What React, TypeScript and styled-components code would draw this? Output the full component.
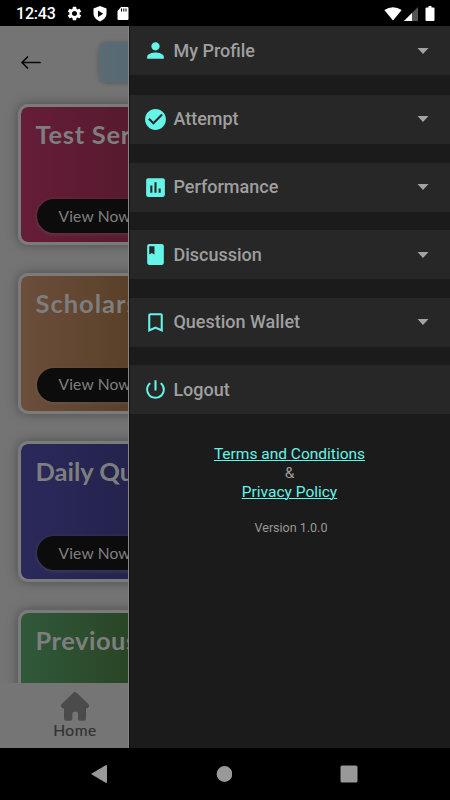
import React from "react";
import styled, { createGlobalStyle } from "styled-components";
import {
  MdPerson,
  MdCheckCircle,
  MdInsertChart,
  MdBook,
  MdBookmarkBorder,
  MdPowerSettingsNew,
  MdSettings,
} from "react-icons/md";

const Global = createGlobalStyle`
  * { box-sizing: border-box; }
  html, body { margin: 0; padding: 0; background: #000; }
  body { font-family: Roboto, sans-serif; overflow: hidden; }
  svg { display: block; flex-shrink: 0; }
`;

const Phone = styled.div`
  width: 450px;
  height: 800px;
  display: flex;
  flex-direction: column;
  background: #000;
  overflow: hidden;
`;

const StatusBar = styled.header`
  height: 26px;
  flex-shrink: 0;
  display: flex;
  align-items: center;
  padding: 1px 14px 0 16px;
  color: #fff;
`;

const Clock = styled.span`
  width: 50px;
  font-size: 16px;
  font-weight: 500;
  letter-spacing: -0.2px;
  line-height: 26px;
`;

const StatusGroup = styled.div<{ $gap: number; $end?: boolean }>`
  display: flex;
  align-items: center;
  gap: ${(p) => p.$gap}px;
  margin-left: ${(p) => (p.$end ? "auto" : "0")};
`;

const Body = styled.div`
  height: 722px;
  flex-shrink: 0;
  display: flex;
`;

const HomePane = styled.main`
  width: 129px;
  flex-shrink: 0;
  overflow: hidden;
  display: flex;
  flex-direction: column;
  background: #747474;
  border-right: 1px solid #858585;
  font-family: Lato, sans-serif;
`;

const TopBar = styled.div`
  height: 58px;
  flex-shrink: 0;
  display: flex;
  padding: 16px 0 0 21px;
`;

const BackIcon = styled.svg`
  margin-top: 14px;
`;

const Banner = styled.div`
  width: 250px;
  height: 40px;
  flex-shrink: 0;
  margin-left: 58px;
  border-radius: 7px;
  background: linear-gradient(90deg, #5b6b72, #566a74 30px);
  box-shadow: 0 1px 5px rgba(0, 0, 0, 0.25);
`;

const CardList = styled.div`
  height: 599px;
  flex-shrink: 0;
  overflow: hidden;
  display: flex;
  flex-direction: column;
  gap: 27.6px;
  padding: 20px 0 0 18px;
`;

const Card = styled.section<{ $from: string; $to: string }>`
  width: 414px;
  height: 141px;
  flex-shrink: 0;
  padding: 15px 0 0 14.5px;
  border: 3px solid #7b7b7b;
  border-radius: 10px;
  background: linear-gradient(90deg, ${(p) => p.$from}, ${(p) => p.$to} 108px) padding-box;
  box-shadow: 0 0 12px rgba(0, 0, 0, 0.35);
  white-space: nowrap;
`;

const CardTitle = styled.h2<{ $spacing: number }>`
  margin: 0;
  height: 77px;
  font-size: 25.5px;
  line-height: 25px;
  font-weight: 700;
  letter-spacing: ${(p) => p.$spacing}px;
  color: #7e7e7e;
`;

const ViewButton = styled.button`
  display: block;
  width: 130px;
  height: 34px;
  margin: 0 0 0 1px;
  padding: 0 0 1px 22px;
  border: 0;
  border-radius: 17px;
  background: #0c0c0c;
  box-shadow: 0 1px 4px rgba(110, 110, 110, 0.4);
  color: #808080;
  font-family: Lato, sans-serif;
  font-size: 15.6px;
  letter-spacing: 0.15px;
  text-align: left;
`;

const BottomTab = styled.nav`
  height: 65px;
  width: 150px;
  flex-shrink: 0;
  display: flex;
  flex-direction: column;
  align-items: center;
  padding-top: 9px;
  background: #757575;
`;

const TabLabel = styled.span`
  color: #333;
  font-size: 15.6px;
  line-height: 19px;
  letter-spacing: 0.5px;
  -webkit-text-stroke: 0.2px #333;
`;

const Drawer = styled.aside`
  flex: 1;
  background: #1b1b1b;
  box-shadow: inset 1px 0 0 #101010;
`;

const Menu = styled.div`
  display: flex;
  flex-direction: column;
  gap: 18.6px;
`;

const MenuRow = styled.div<{ $first?: boolean }>`
  height: 49px;
  margin-bottom: ${(p) => (p.$first ? "1.4px" : "0")};
  display: flex;
  align-items: center;
  padding: 0 21px 0 14px;
  background: #272727;
  box-shadow: inset 1px 0 0 #161616;
  color: #65f4e8;
`;

const MenuLabel = styled.span`
  flex: 1;
  margin-left: 5.4px;
  font-size: 18px;
  line-height: 22px;
  font-weight: 500;
  color: #9f9f9f;
`;

const Legal = styled.div`
  display: flex;
  flex-direction: column;
  align-items: center;
  padding-top: 31px;
  font-size: 15.5px;
  line-height: 19px;
  color: #999;
`;

const LegalLink = styled.a`
  color: #65f4e8;
  text-decoration: underline;
  text-decoration-thickness: 1px;
  text-underline-offset: 1px;
`;

const Version = styled.span`
  margin: 18px 0 0 3px;
  font-size: 12.5px;
  line-height: 16px;
`;

const SystemNav = styled.footer`
  height: 52px;
  flex-shrink: 0;
  display: flex;
  align-items: center;
  justify-content: space-between;
  padding: 0 92px 0 90px;
`;

const cards = [
  { title: "Test Series", from: "#661d38", to: "#571a2f", spacing: 0.7 },
  { title: "Scholarship", from: "#6b4e3b", to: "#5a4029", spacing: 1 },
  { title: "Daily Quiz", from: "#2a295b", to: "#24234d", spacing: 0 },
  { title: "Previous Year", from: "#30593a", to: "#294526", spacing: 0.5 },
];

const menu = [
  { label: "My Profile", Icon: MdPerson, open: true },
  { label: "Attempt", Icon: MdCheckCircle, open: true },
  { label: "Performance", Icon: MdInsertChart, open: true },
  { label: "Discussion", Icon: MdBook, open: true },
  { label: "Question Wallet", Icon: MdBookmarkBorder, open: true },
  { label: "Logout", Icon: MdPowerSettingsNew, open: false },
];

export default function App() {
  return (
    <>
      <Global />
      <Phone>
        <StatusBar>
          <Clock>12:43</Clock>
          <StatusGroup $gap={10}>
            <MdSettings size={17} />
            <svg width="14" height="16" viewBox="0 0 14 16">
              <path fill="#fff" d="M7 0l6.500 2.500v5C13.500 11 10.500 14 7 15.500 3.500 14 .5 11 .5 7.500v-5z" />
              <path d="M5 4.500l5.200 3.300L5 11z" />
            </svg>
            <svg width="12" height="15" viewBox="0 0 12 15">
              <path fill="#fff" d="M4 1h6.500q1 0 1 1v11q0 1-1 1h-9q-1 0-1-1V5z" />
              <path stroke="#000" d="M4.500 2.500v3M6.800 2.500v3M9 2.500v3" />
            </svg>
          </StatusGroup>
          <StatusGroup $gap={2} $end>
            <svg width="18" height="14" viewBox="0 0 18 14">
              <path fill="#fff" d="M9 13.500L.3 3Q9-2.400 17.700 3z" />
            </svg>
            <svg width="14" height="14" viewBox="0 0 14 14">
              <path fill="#555" d="M0 14L14 0v14z" />
              <path fill="#fff" d="M0 14l8-8v8z" />
            </svg>
            <svg width="16" height="15" viewBox="0 0 16 15">
              <path fill="#fff" d="M8.500 0h3v1.500h2q1 0 1 1V14q0 1-1 1h-7q-1 0-1-1V2.500q0-1 1-1h2z" />
            </svg>
          </StatusGroup>
        </StatusBar>

        <Body>
          <HomePane>
            <TopBar>
              <BackIcon width="20" height="14" viewBox="0 0 20 14" fill="none" stroke="#090909" strokeWidth="1.700" strokeLinecap="round" strokeLinejoin="round">
                <path d="M6.500 1L1 6.500 6.500 12M1 6.500h18" />
              </BackIcon>
              <Banner />
            </TopBar>
            <CardList>
              {cards.map((c) => (
                <Card key={c.title} $from={c.from} $to={c.to}>
                  <CardTitle $spacing={c.spacing}>{c.title}</CardTitle>
                  <ViewButton>View Now</ViewButton>
                </Card>
              ))}
            </CardList>
            <BottomTab>
              <svg width="28" height="29" viewBox="0 0 28 29">
                <path
                  fill="#4b4b4b"
                  d="M12.300.7q1.700-1.300 3.400 0L27.300 12q1.200 1.400.4 3-.6 1.400-2.700 1.400v10q0 2.300-2.300 2.300H19q-2 0-2-2v-5.300q0-1.700-1.700-1.700h-2.200q-1.700 0-1.700 1.700v5.300q0 2-2 2H5.300Q3 28.700 3 26.400v-10q-2.100 0-2.700-1.400-.8-1.600.4-3z"
                />
              </svg>
              <TabLabel>Home</TabLabel>
            </BottomTab>
          </HomePane>

          <Drawer>
            <Menu>
              {menu.map(({ label, Icon, open }, i) => (
                <MenuRow key={label} $first={i === 0}>
                  <Icon size={25} />
                  <MenuLabel>{label}</MenuLabel>
                  {open && (
                    <svg width="12" height="6" viewBox="0 0 12 6">
                      <path fill="#a3a3a3" d="M.5 0h11L6 6z" />
                    </svg>
                  )}
                </MenuRow>
              ))}
            </Menu>
            <Legal>
              <LegalLink>Terms and Conditions</LegalLink>
              <span>&amp;</span>
              <LegalLink>Privacy Policy</LegalLink>
              <Version>Version 1.0.0</Version>
            </Legal>
          </Drawer>
        </Body>

        <SystemNav>
          <svg width="18" height="18" viewBox="0 0 18 18">
            <path fill="#999" d="M1 9L16 0q1 0 1 1v16q0 1-1 1z" />
          </svg>
          <svg width="16" height="16" viewBox="0 0 16 16">
            <circle cx="8.500" cy="8" r="7.900" fill="#999" />
          </svg>
          <svg width="18" height="18" viewBox="0 0 18 18">
            <rect x=".5" y=".5" width="17" height="17" rx="1.500" fill="#999" />
          </svg>
        </SystemNav>
      </Phone>
    </>
  );
}
